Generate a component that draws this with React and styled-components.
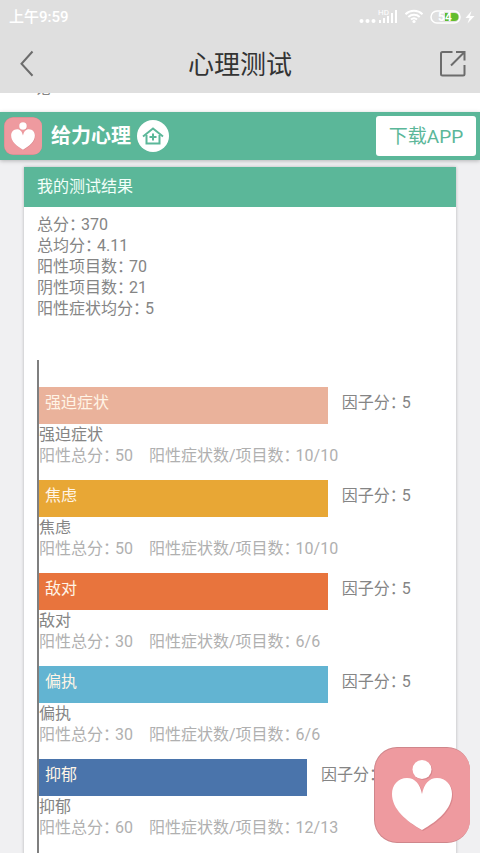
import React from 'react'
import styled, { createGlobalStyle } from 'styled-components'

const Colors = {
  GREEN: '#5bb799',
  PINK: '#ee9a9f',
  TEXT: '#858585',
  MUTED: '#b0b0b0',
  BAR: '#dfdfdf',
  ICON: '#6c6c6c',
}

const MAX_SCORE = 5
const MAX_BAR_PERCENT = 71.5

const summary = [
  { label: '总分', value: '370' },
  { label: '总均分', value: '4.11' },
  { label: '阳性项目数', value: '70' },
  { label: '阴性项目数', value: '21' },
  { label: '阳性症状均分', value: '5' },
]

const factors = [
  { name: '强迫症状', score: 5, total: 50, ratio: '10/10', color: '#eab29b' },
  { name: '焦虑', score: 5, total: 50, ratio: '10/10', color: '#e8a735' },
  { name: '敌对', score: 5, total: 30, ratio: '6/6', color: '#e8743d' },
  { name: '偏执', score: 5, total: 30, ratio: '6/6', color: '#62b4d2' },
  { name: '抑郁', score: 4.64, total: 60, ratio: '12/13', color: '#4a74ab' },
]

const App = () => {
  return (
    <React.Fragment>
      <GlobalStyle />
      <TopBar>
        <StatusBar />
        <NavBar>
          <IconButton aria-label="返回">
            <BackIcon />
          </IconButton>
          <Title>心理测试</Title>
          <IconButton aria-label="分享">
            <ShareIcon />
          </IconButton>
        </NavBar>
      </TopBar>
      <PreviousLine>
        <span>论</span>
      </PreviousLine>
      <BrandBar>
        <Logo size={38} />
        <BrandName>给力心理</BrandName>
        <HomeLink href="#home" aria-label="首页">
          <HomeIcon />
        </HomeLink>
        <DownloadButton>下载APP</DownloadButton>
      </BrandBar>
      <Card>
        <CardTitle>我的测试结果</CardTitle>
        <CardBody>
          {summary.map(item => (
            <Line key={item.label}>{item.label}： {item.value}</Line>
          ))}
          <Chart>
            {factors.map(factor => (
              <Factor key={factor.name} {...factor} />
            ))}
          </Chart>
        </CardBody>
      </Card>
      <FloatingButton aria-label="给力心理">
        <Logo size={96} />
      </FloatingButton>
    </React.Fragment>
  )
}

const Factor = ({ name, score, total, ratio, color }) => (
  <FactorItem>
    <BarRow>
      <Bar
        color={color}
        style={{ width: `${(score / MAX_SCORE) * MAX_BAR_PERCENT}%` }}>
        {name}
      </Bar>
      <Score>因子分： {score}</Score>
    </BarRow>
    <Line>{name}</Line>
    <Details>
      <span>阳性总分： {total}</span>
      <span>阳性症状数/项目数： {ratio}</span>
    </Details>
  </FactorItem>
)

const StatusBar = () => (
  <Status>
    <Clock>上午9:59</Clock>
    <svg width="118" height="20" viewBox="0 0 118 20" fill="#fff">
      <circle cx="3.5" cy="14" r="2" />
      <circle cx="9.5" cy="14" r="2" />
      <circle cx="15.5" cy="14" r="2" />
      <text x="20" y="8" fontSize="8" fontFamily="Roboto, sans-serif">HD</text>
      <path d="M21 13h2v3h-2zM25 11h2v5h-2zM29 9h2v7h-2zM33 6h2v10h-2zM37 3h2v13h-2z" />
      <g fill="none" stroke="#fff" strokeWidth="2">
        <path d="M47.5 7.2a12.5 12.5 0 0 1 17 0" />
        <path d="M50.3 10a8.5 8.5 0 0 1 11.4 0" />
        <path d="M53 12.6a4.6 4.6 0 0 1 6 0" />
      </g>
      <circle cx="56" cy="14.5" r="1.6" />
      <rect x="73" y="4" width="29" height="12" rx="6" fill="none" stroke="#fff" strokeWidth="1.5" />
      <path d="M87 6h9.500a4 4 0 0 1 0 8H87z" fill="#62bd2e" />
      <text x="80" y="14" fontSize="12" fontWeight="700" fontFamily="Roboto, sans-serif">54</text>
      <path d="M113.500 4l-6 7h4l-2 5.500 7-7.500h-4.500z" />
    </svg>
  </Status>
)

const BackIcon = () => (
  <svg width="26" height="28" viewBox="0 0 26 28" fill="none" stroke={Colors.ICON} strokeWidth="2">
    <path d="M18.500 1.500L7.500 13.800l11 12" />
  </svg>
)

const ShareIcon = () => (
  <svg width="26" height="28" viewBox="0 0 26 28" fill="none" stroke={Colors.ICON} strokeWidth="2">
    <path d="M12.500 2H2.500a1.500 1.500 0 0 0-1.500 1.500v20.500a1.500 1.500 0 0 0 1.500 1.500h20.500a1.500 1.500 0 0 0 1.500-1.500V15" />
    <path d="M16 2h8.500v8.500M24 2.500L11 15.500" />
  </svg>
)

const HomeIcon = () => (
  <svg width="22" height="18" viewBox="0 0 22 18" fill="none" stroke={Colors.GREEN} strokeWidth="2">
    <path d="M1 9.500L11 1.500l10 8" />
    <path d="M4.500 8v8.500h13V8M11 6.500v7M7.500 10h7" />
  </svg>
)

const HEART = 'M48 47C46 37 41 31 33 31C24 31 18 38 18 47C18 62 32 74 48 83C64 74 78 62 78 47C78 38 72 31 63 31C55 31 50 37 48 47Z'

const Logo = ({ size }) => (
  <svg width={size} height={size} viewBox="0 0 96 96">
    <rect width="96" height="96" rx="23" fill="#cf868b" />
    <rect x="1" y="1" width="95" height="94" rx="22" fill={Colors.PINK} />
    <g fill="#d9868c" transform="translate(1 1)">
      <circle cx="48" cy="22.500" r="9.500" />
      <path d={HEART} />
    </g>
    <g fill="#fff">
      <circle cx="48" cy="22.500" r="9.500" />
      <path d={HEART} />
    </g>
  </svg>
)

const GlobalStyle = createGlobalStyle`
  * {
    box-sizing: border-box;
  }

  body {
    margin: 0;
    overflow: hidden;
    background: #f0f0f2;
    color: ${Colors.TEXT};
    font-family: Roboto, "Noto Sans CJK SC", sans-serif;
    font-size: 16px;
    line-height: 21px;
    font-feature-settings: "halt";
  }

  button {
    padding: 0;
    border: 0;
    background: none;
    font: inherit;
    cursor: pointer;
  }

  svg {
    display: block;
    flex: none;
  }
`

const TopBar = styled.header`
  position: relative;
  z-index: 1;
  height: 93px;
  background: ${Colors.BAR};
`

const Status = styled.div`
  display: flex;
  align-items: center;
  justify-content: space-between;
  height: 34px;
  padding: 0 4px 0 9px;
`

const Clock = styled.span`
  color: #fff;
  font-size: 15px;
  font-weight: 500;
`

const NavBar = styled.nav`
  display: flex;
  align-items: center;
  justify-content: space-between;
  height: 59px;
  padding: 0 14px;
`

const IconButton = styled.button`
  display: flex;
`

const Title = styled.h1`
  margin: 0;
  padding-top: 2px;
  color: #333;
  font-size: 26px;
  font-weight: 400;
  line-height: 32px;
`

const PreviousLine = styled.div`
  display: flex;
  align-items: flex-end;
  height: 40px;
  margin-top: -21px;
  padding: 0 35px 13px;
  background: #fff;
`

const BrandBar = styled.div`
  position: relative;
  display: flex;
  align-items: center;
  height: 48px;
  padding: 0 4px;
  background: ${Colors.GREEN};
  box-shadow: 0 1px 4px rgba(0, 0, 0, 0.25);
`

const BrandName = styled.strong`
  margin: 0 6px 0 9px;
  color: #fff;
  font-size: 20px;
  font-weight: 700;
`

const HomeLink = styled.a`
  display: flex;
  align-items: center;
  justify-content: center;
  width: 32px;
  height: 32px;
  border-radius: 50%;
  background: #fff;
`

const DownloadButton = styled.button`
  && {
    width: 100px;
    height: 40px;
    margin-left: auto;
    border-radius: 3px;
    background: #fff;
    color: ${Colors.GREEN};
    font-size: 19px;
  }
`

const Card = styled.main`
  margin: 7px 24px 0;
  background: #fff;
  box-shadow: 0 0 3px rgba(0, 0, 0, 0.25);
`

const CardTitle = styled.h2`
  margin: 0;
  padding: 0 13px;
  background: ${Colors.GREEN};
  color: #f2fffa;
  font-size: 16px;
  font-weight: 400;
  line-height: 40px;
`

const CardBody = styled.div`
  padding: 7px 13px 0;
`

const Line = styled.div`
  color: ${Colors.TEXT};
`

const Chart = styled.ul`
  margin: 41px 0 0;
  padding: 27px 0;
  border-left: 2px solid #7f7f7f;
  list-style: none;
`

const FactorItem = styled.li`
  margin-bottom: 14px;
`

const BarRow = styled.div`
  display: flex;
  align-items: stretch;
  height: 37px;
  line-height: 32px;
`

const Bar = styled.div`
  flex: none;
  padding-left: 6px;
  background: ${props => props.color};
  color: #fff4e6;
`

const Score = styled.span`
  margin-left: 14px;
  white-space: nowrap;
`

const Details = styled(Line)`
  display: flex;
  gap: 16px;
  color: ${Colors.MUTED};
`

const FloatingButton = styled.button`
  position: fixed;
  right: 10px;
  bottom: 10px;
`

export default App
